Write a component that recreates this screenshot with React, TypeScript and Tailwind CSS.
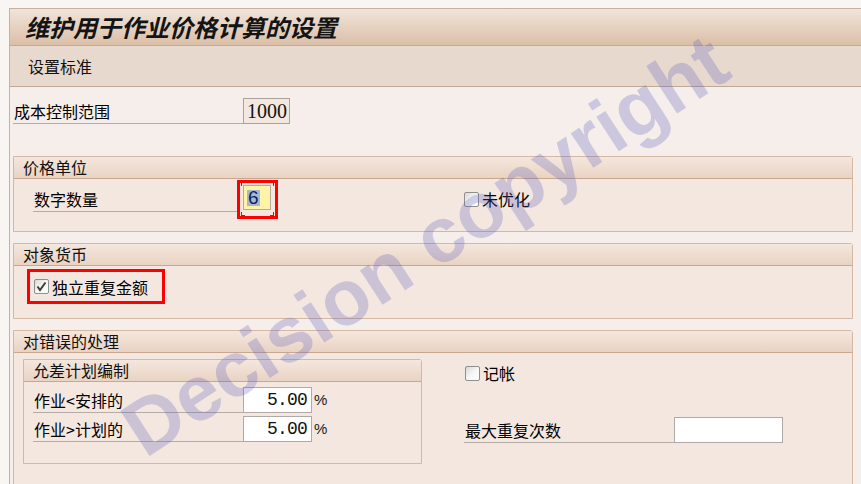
import React from "react";

function CheckBox({ checked = false }: { checked?: boolean }) {
  return (
    <div className="w-[15px] h-[15px] shrink-0 border border-[#8f8f8f] rounded-[2px] bg-linear-to-br from-[#d9d9d9] via-[#f6f6f6] to-white flex items-center justify-center">
      {checked && (
        <svg width="11" height="11" viewBox="0 0 11 11">
          <path d="M1.5 5.5 L4 9 L9.5 1.5" fill="none" stroke="#3f3f2c" strokeWidth="2" />
        </svg>
      )}
    </div>
  );
}

function Group({
  title,
  className = "",
  bodyClass = "",
  children,
}: {
  title: string;
  className?: string;
  bodyClass?: string;
  children?: React.ReactNode;
}) {
  return (
    <div className={"border border-[#d3b8a4] rounded-tr-[3px] bg-[#f3e7df] " + className}>
      <div className="h-[22px] border-b border-[#c9a78f] bg-linear-to-b from-[#f4e7de] to-[#e9d3c3] pl-[9px] text-[16px] leading-[21px] text-[#111]">
        {title}
      </div>
      <div className={bodyClass}>{children}</div>
    </div>
  );
}

function Label({ text, w }: { text: string; w: string }) {
  return (
    <div className={"h-[26px] border-b border-[#b5aca6] pl-[1px] text-[16px] leading-[26px] text-black " + w}>
      {text}
    </div>
  );
}

export default function App() {
  return (
    <div className="relative w-[861px] h-[484px] overflow-hidden bg-[#f8f5f2] pt-[8px] pl-[9px] font-['Noto_Sans_CJK_SC',sans-serif]">
      <div className="h-[600px] border-l border-t border-[#c6b0a0] bg-[#f5eeea]">
        <div className="h-[37px] border-b border-[#c4a994] bg-linear-to-b from-[#f1e4da] to-[#dbbfa7] pl-[15px] text-[24px] leading-[36px] italic font-bold text-[#141414]">
          维护用于作业价格计算的设置
        </div>
        <div className="h-[41px] border-b border-[#c0a898] bg-[#e8d9ce] pl-[18px] text-[16px] leading-[40px] text-[#111]">
          设置标准
        </div>

        <div className="pl-[3px]">
          {/* Cost control area */}
          <div className="mt-[11px] flex h-[26px]">
            <Label text="成本控制范围" w="w-[230px]" />
            <div className="w-[47px] h-[26px] border border-[#aaa29c] bg-[#f2e8e0] pl-[3px] font-['Liberation_Serif',serif] text-[20px] leading-[24px] text-[#111]">
              1000
            </div>
          </div>

          {/* Price unit */}
          <Group title="价格单位" className="mt-[32px] mr-[8px]" bodyClass="h-[52px] flex items-start">
            <div className="ml-[19px] mt-[7px]">
              <Label text="数字数量" w="w-[204px]" />
            </div>
            <div className="relative mt-[1px] w-[41px] h-[39px] border-[3px] border-[#ff0000] pl-[3px] pt-[2px]">
              <div className="w-[28px] h-[25px] border border-[#b4ab9c] bg-[#fff3a8] pl-[3px] pt-[4px]">
                <span className="block w-[13px] h-[16px] bg-[#a3b9d3] font-['Liberation_Sans',sans-serif] text-[19px] leading-[16px] text-[#0f1f5c] pl-[1px]">
                  6
                </span>
              </div>
              <div className="absolute left-[1px] top-[-1px] w-[4px] h-[4px] border-l border-t border-[#ff0000]" />
              <div className="absolute right-[1px] top-[-1px] w-[4px] h-[4px] border-r border-t border-[#ff0000]" />
              <div className="absolute left-[1px] bottom-[0px] w-[4px] h-[4px] border-l border-b border-[#ff0000]" />
              <div className="absolute right-[1px] bottom-[0px] w-[4px] h-[4px] border-r border-b border-[#ff0000]" />
            </div>
            <div className="ml-[186px] mt-[12px] flex items-center">
              <CheckBox />
              <span className="ml-[3px] text-[16px] leading-[16px] text-black">未优化</span>
            </div>
          </Group>

          {/* Object currency */}
          <Group title="对象货币" className="mt-[11px] mr-[8px]" bodyClass="h-[52px] flex items-start">
            <div className="ml-[13px] mt-[3px] w-[138px] h-[35px] border-[3px] border-[#ff0000] flex items-center pl-[4px]">
              <CheckBox checked />
              <span className="ml-[3px] text-[16px] leading-[16px] text-black">独立重复金额</span>
            </div>
          </Group>

          {/* Error handling */}
          <Group title="对错误的处理" className="mt-[11px] mr-[8px]" bodyClass="h-[160px] flex items-start">
            <Group title="允差计划编制" className="ml-[9px] mt-[6px] w-[399px] h-[105px]" bodyClass="pt-[5px] pl-[9px]">
              <div className="flex items-end h-[26px]">
                <Label text="作业<安排的" w="w-[210px]" />
                <div className="w-[69px] h-[26px] border border-[#b0aaa6] bg-white text-right pr-[4px] font-['Liberation_Mono',monospace] text-[18px] leading-[24px] tracking-[-0.8px] text-[#111]">
                  5.00
                </div>
                <span className="ml-[2px] self-center font-['Liberation_Sans',sans-serif] text-[15px] leading-[16px] text-[#222]">%</span>
              </div>
              <div className="mt-[3px] flex items-end h-[26px]">
                <Label text="作业>计划的" w="w-[210px]" />
                <div className="w-[69px] h-[26px] border border-[#b0aaa6] bg-white text-right pr-[4px] font-['Liberation_Mono',monospace] text-[18px] leading-[24px] tracking-[-0.8px] text-[#111]">
                  5.00
                </div>
                <span className="ml-[2px] self-center font-['Liberation_Sans',sans-serif] text-[15px] leading-[16px] text-[#222]">%</span>
              </div>
            </Group>
            <div className="ml-[42px]">
              <div className="mt-[12px] ml-[1px] flex items-center">
                <CheckBox />
                <span className="ml-[3px] text-[16px] leading-[16px] text-black">记帐</span>
              </div>
              <div className="mt-[36px] flex">
                <Label text="最大重复次数" w="w-[210px]" />
                <div className="w-[109px] h-[26px] border border-[#b0aaa6] bg-white" />
              </div>
            </div>
          </Group>
        </div>
      </div>

      {/* Watermark */}
      <div className="pointer-events-none absolute left-[425px] top-[245px] -translate-x-1/2 -translate-y-1/2 -rotate-[33deg] whitespace-nowrap font-['Liberation_Sans',sans-serif] font-bold text-[78px] leading-none text-[rgba(90,90,190,0.26)]">
        Decision copyright
      </div>
    </div>
  );
}
